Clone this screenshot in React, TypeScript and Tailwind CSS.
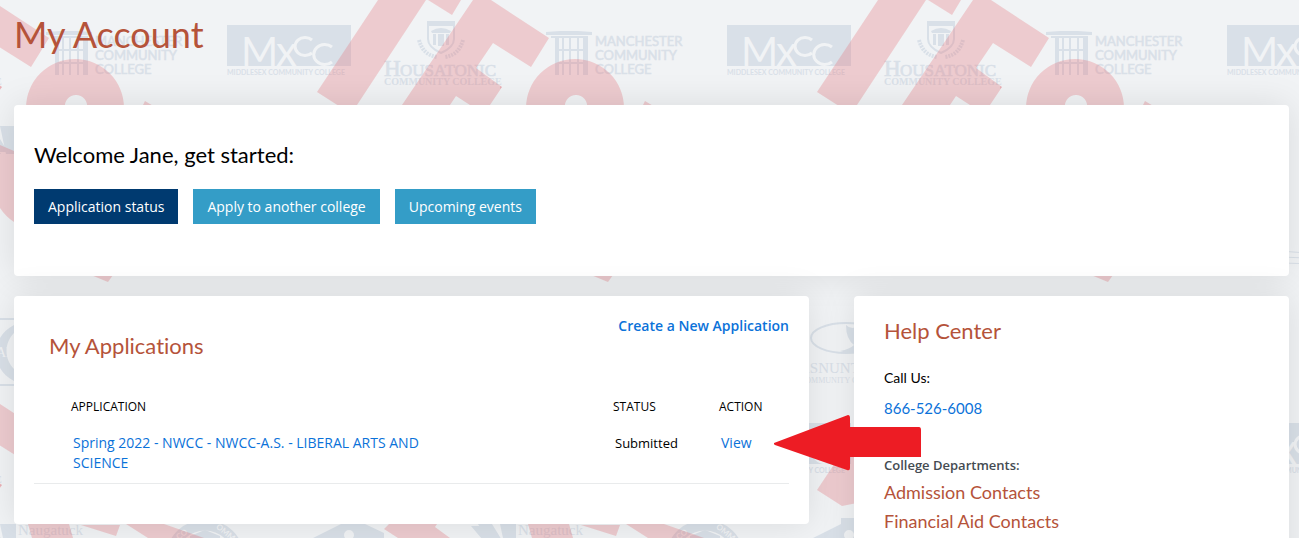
import React from 'react';

const heading = "font-['Lato','Open_Sans',sans-serif] [font-variant-ligatures:none] text-[#b5533a]";

const applications = [
  {
    name: 'Spring 2022 - NWCC - NWCC-A.S. - LIBERAL ARTS AND SCIENCE',
    status: 'Submitted',
  },
];

const departments = ['Admission Contacts', 'Financial Aid Contacts'];

// Offsets of the repeated backdrop tile
const tiles = [0, 398, 796].flatMap((y) => [-500, 0, 500, 1000, 1500, 2000].map((x) => ({ x, y })));

function LogoTile() {
  return (
    <>
      <g fill="#d9e0e8" stroke="none">
        {/* Middlesex */}
        <rect x="227" y="25" width="124" height="41" />
        <g fill="none" stroke="#f1f3f5" strokeWidth="3">
          <path d="M312 40a10 9 0 1 0 0 13" />
          <path d="M332 47a11 10 0 1 0 0 15" />
        </g>
        <g fill="#f1f3f5" fontFamily="Lato, sans-serif">
          <text x="241" y="66" fontSize="40">M</text>
          <text x="276" y="66" fontSize="42">x</text>
        </g>
        <text x="227" y="75" fontSize="7" fontWeight="700" fontFamily="Lato, sans-serif">MIDDLESEX COMMUNITY COLLEGE</text>

        {/* Housatonic */}
        <path d="M427 21h28v5h-28z" />
        <path d="M428 26v13c0 6 4 10 13 14c9-4 13-8 13-14v-13" fill="none" stroke="#d9e0e8" strokeWidth="2" />
        <path d="M431 31q10-6 20 0l-1 2h-18zM433 34h3v11h-3zM438 34h6v12h-6zM446 34h3v11h-3z" />
        <path d="M419 40q4 15 18 17M463 40q-4 15-18 17" fill="none" stroke="#d9e0e8" strokeWidth="4" strokeDasharray="2 1" />
        <g fontFamily="'Liberation Serif', serif" fontWeight="700">
          <text x="384" y="76" fontSize="23" fontWeight="400" stroke="#d9e0e8" strokeWidth="0.6">H</text>
          <text x="400" y="76" fontSize="17" fontWeight="400" stroke="#d9e0e8" strokeWidth="0.6">OUSATONIC</text>
          <text x="384" y="85" fontSize="10">COMMUNITY COLLEGE</text>
        </g>

        {/* Manchester */}
        <path d="M546 32l14-1h18l14 1v3h-46zM551 36h37v2h-37zM555 38h4v37h-4zM583 38h5v37h-5zM562 38h2v37h-2zM569 38h2v37h-2zM577 38h2v37h-2zM559 49h24v2h-24zM559 62h24v2h-24z" />
        <g fontFamily="Lato, sans-serif" fontSize="13" stroke="#d9e0e8" strokeWidth="0.5">
          <text x="595" y="46">MANCHESTER</text>
          <text x="595" y="60">COMMUNITY</text>
          <text x="595" y="74">COLLEGE</text>
        </g>

        {/* Naugatuck Valley */}
        <path d="M471 128h12l18 26h-8zM478 126h14l16 26h-14zM500 126h16v28h-10z" />
        <g fontFamily="'Liberation Serif', serif" fontSize="15">
          <text x="518" y="137">Naugatuck</text>
          <text x="518" y="150">Valley</text>
        </g>

        {/* Round seal */}
        <circle cx="705" cy="161" r="34" fill="none" stroke="#d9e0e8" strokeWidth="11" />
        <circle cx="705" cy="161" r="25" fill="none" stroke="#d9e0e8" strokeWidth="2" />
        <path d="M690 138l15-6 15 6v4h-30z" />
        <g fill="#f1f3f5" fontFamily="Lato, sans-serif" fontSize="8" fontWeight="700">
          <text transform="rotate(-38 705 161)" x="696" y="130">CO</text>
          <text transform="rotate(38 705 161)" x="694" y="130">OMM</text>
        </g>

        {/* Gabled house */}
        <path fillRule="evenodd" d="M313 140l28-14v-6h24v6l19 9v5zM344 137a5 5 0 1 0 10 0a5 5 0 1 0-10 0z" />

        {/* Asnuntuck */}
        <ellipse cx="346" cy="338" rx="35" ry="15" fill="none" stroke="#d9e0e8" strokeWidth="2" />
        <path d="M346 325q6 6 14 0v26q-10 4-20 0q10-2 14-6q-8-6-8-20z" />
        <g fontFamily="'Liberation Serif', serif">
          <text x="299" y="373" fontSize="15">ASNUNTUCK</text>
          <text x="300" y="383" fontSize="8">COMMUNITY COLLEGE</text>
        </g>

        {/* Capital */}
        <path d="M480 318h40v2h-40zM480 384h40v2h-40z" />
        <path d="M514 325c-24 12-24 44 0 56v-12c-10-10-10-26 0-36z" />
        <text x="496" y="357" fontSize="14" fontFamily="'Liberation Serif', serif" fill="#f1f3f5">AP</text>
        <path d="M780 251q20 2 40 2M780 257q20 1 40 1M780 263q20 1 40 0" fill="none" stroke="#d9e0e8" />
      </g>

      {/* Slanted lettering */}
      <g fill="#e57076" fillOpacity="0.3">
        <path d="M378 0h48L357 105l-15 3-25-16z" />
        <path d="M428 0h33l-9 15z" />
        <path d="M473 0h18l58 38-18 29-38-24-17 25 26 19-12 18h-20l-14-9-6 9h-48z" />
        <path fillRule="evenodd" d="M575 59a49 49 0 0 1 49 49h-98a49 49 0 0 1 49-49zM576 95a11 11 0 0 0-11 13h22a11 11 0 0 0-11-13z" />
        <path d="M642 107l3-6 10 6zM500 86l2 1-2 2z" />
        <path d="M528 126h41l4 14h-41zM581 127h39l-4 11zM626 126h38l40 14h-56z" />
        <path d="M389 126h48l-2 3 15 11h-52l-14-9z" />
        <path d="M500 145l14 6v71q-8-5-14-14z" />
        <path d="M591 275h22l-5 7z" />
      </g>
    </>
  );
}

function Backdrop() {
  return (
    <svg className="pointer-events-none absolute inset-0 h-full w-full" aria-hidden="true">
      <defs>
        <g id="logo-tile">
          <LogoTile />
        </g>
      </defs>
      {tiles.map(({ x, y }) => (
        <use key={`${x}-${y}`} href="#logo-tile" x={x} y={y} />
      ))}
    </svg>
  );
}

function Card({ className, children }: { className: string; children: React.ReactNode }) {
  return (
    <section className={`rounded bg-white shadow-[0_0_35px_rgba(0,0,0,0.1)] ${className}`}>
      {children}
    </section>
  );
}

export default function App() {
  return (
    <div className="relative h-screen overflow-hidden bg-[#f1f3f5] font-['Open_Sans',sans-serif] text-sm text-black">
      <Backdrop />

      <main className="relative pr-[10px] pl-[14px]">
        <h1 className={`${heading} h-[105px] pt-3 text-[36px] leading-[44px]`}>My Account</h1>

        <Card className="px-5 pt-9 pb-[52px]">
          <h2 className="font-['Lato',sans-serif] text-[22px] leading-7">Welcome Jane, get started:</h2>
          <div className="mt-5 flex gap-[15px]">
            <button className="h-[35px] bg-[#003a70] px-[14px] text-white">Application status</button>
            <button className="h-[35px] bg-[#349dc7] px-[14px] text-white">Apply to another college</button>
            <button className="h-[35px] bg-[#349dc7] px-[14px] text-white">Upcoming events</button>
          </div>
        </Card>

        <div className="mt-5 grid grid-cols-[795fr_435fr] items-start gap-[45px]">
          <Card className="relative z-10 px-5 pt-5 pb-10">
            <div className="text-right">
              <a href="#new" className="font-semibold text-[#0b72d9]">Create a New Application</a>
            </div>
            <h2 className={`${heading} pl-[15px] text-[22px] leading-5`}>My Applications</h2>

            <table className="mt-[41px] w-full table-fixed border-b border-[#e9ebec] text-left">
              <thead className="text-xs leading-5">
                <tr>
                  <th className="pl-[37px] font-medium">APPLICATION</th>
                  <th className="w-[106px] font-medium">STATUS</th>
                  <th className="w-[70px] font-medium">ACTION</th>
                </tr>
              </thead>
              <tbody>
                {applications.map((app) => (
                  <tr key={app.name} className="align-top leading-5">
                    <td className="pt-4 pr-[180px] pb-[10px] pl-[39px]">
                      <a href="#application" className="text-[#0b72d9]">{app.name}</a>
                    </td>
                    <td className="pt-4 pl-[2px] text-[13px]">{app.status}</td>
                    <td className="pt-4 pl-[2px]">
                      <div className="relative">
                        <a href="#view" className="text-[#0b72d9]">View</a>
                        <svg className="absolute top-[-18px] left-[53px] z-10" width="148" height="56" viewBox="0 0 148 56" fill="#ed1c24">
                          <path d="M0 28L74 0Q76 0 76 3V12H145Q147 12 147 15V42H76V53Q76 56 73 55L1 30Q-1 29 0 28Z" />
                        </svg>
                      </div>
                    </td>
                  </tr>
                ))}
              </tbody>
            </table>
          </Card>

          <Card className="min-h-[300px] px-[30px] pt-[21px]">
            <h2 className={`${heading} text-[22px] leading-7`}>Help Center</h2>
            <p className="mt-[23px] font-['Lato',sans-serif] leading-5">Call Us:</p>
            <a href="tel:8665266008" className="mt-[10px] block font-['Lato',sans-serif] text-[15px] leading-5 text-[#0b72d9]">866-526-6008</a>
            <h3 className="mt-[37px] text-[13px] leading-5 font-semibold text-[#444b52]">College Departments:</h3>
            <ul className="mt-[3px]">
              {departments.map((name) => (
                <li key={name}>
                  <a href="#contacts" className={`${heading} text-lg leading-[29px]`}>{name}</a>
                </li>
              ))}
            </ul>
          </Card>
        </div>
      </main>
    </div>
  );
}
